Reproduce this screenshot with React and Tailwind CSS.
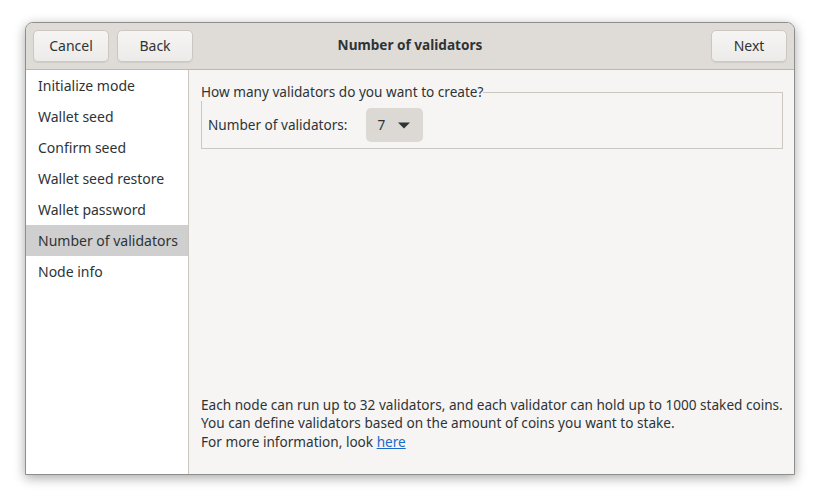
import React from "react";

const steps = [
  "Initialize mode",
  "Wallet seed",
  "Confirm seed",
  "Wallet seed restore",
  "Wallet password",
  "Number of validators",
  "Node info",
];

const HeaderButton = ({ children }) => (
  <button className="h-[32px] w-[76px] rounded-[5px] border border-[#cdc7c2] bg-gradient-to-b from-[#f6f5f4] to-[#edebe9] text-[14px] text-[#2e3436] shadow-[0_1px_1px_rgba(0,0,0,0.07)]">
    {children}
  </button>
);

const App = () => {
  return (
    <div
      className="h-[504px] w-[820px] bg-white pl-[25px] pt-[22px]"
      style={{ fontFamily: '"Noto Sans", sans-serif' }}
    >
      <div className="flex h-[453px] w-[770px] flex-col overflow-hidden rounded-t-[8px] border border-[#8e8e8e] bg-[#f6f5f4] shadow-[0_3px_12px_rgba(0,0,0,0.35)]">
        {/* header bar */}
        <div className="grid h-[47px] shrink-0 grid-cols-[1fr_auto_1fr] items-center border-b border-[#bfb8b1] bg-[#dfdcd8] px-[7px] pb-px">
          <div className="flex gap-[8px]">
            <HeaderButton>Cancel</HeaderButton>
            <HeaderButton>Back</HeaderButton>
          </div>
          <div className="text-center text-[13.6px] font-bold text-[#2e3436]">
            Number of validators
          </div>
          <div className="flex justify-end">
            <HeaderButton>Next</HeaderButton>
          </div>
        </div>

        <div className="flex min-h-0 flex-1">
          {/* sidebar */}
          <div className="w-[163px] shrink-0 border-r border-[#cdc7c2] bg-white">
            {steps.map((s) => (
              <div
                key={s}
                className={
                  "flex h-[31px] items-center pl-[12px] text-[14px] text-[#2e3436] " +
                  (s === "Number of validators" ? "bg-[#cfcfcf]" : "")
                }
              >
                {s}
              </div>
            ))}
          </div>

          {/* content */}
          <div className="flex flex-1 flex-col justify-between px-[12px] pt-[13px] pb-[23px] text-[13.6px] text-[#2e3436]">
            <fieldset className="h-[66px] border border-[#cdc7c2] px-[6px]">
              <legend className="-ml-[7px] px-0 leading-[18px]">
                How many validators do you want to create?
              </legend>
              <div className="mt-[7px] flex items-center">
                <span>Number of validators:</span>
                <div className="ml-[18px] flex h-[34px] w-[57px] items-center rounded-[5px] bg-[#dcd8d4] pl-[12px]">
                  <span>7</span>
                  <svg width="12" height="8" viewBox="0 0 12 8" className="ml-[13px]">
                    <path d="M0 1.5 H12 L6 7.5 Z" fill="#2e3436" />
                  </svg>
                </div>
              </div>
            </fieldset>

            <div className="whitespace-nowrap leading-[18.5px]">
              <div>
                Each node can run up to 32 validators, and each validator can hold up to 1000 staked coins.
              </div>
              <div>You can define validators based on the amount of coins you want to stake.</div>
              <div>
                For more information, look{" "}
                <a href="#" className="text-[#1b6acb] underline">
                  here
                </a>
              </div>
            </div>
          </div>
        </div>
      </div>
    </div>
  );
};

export default App;
